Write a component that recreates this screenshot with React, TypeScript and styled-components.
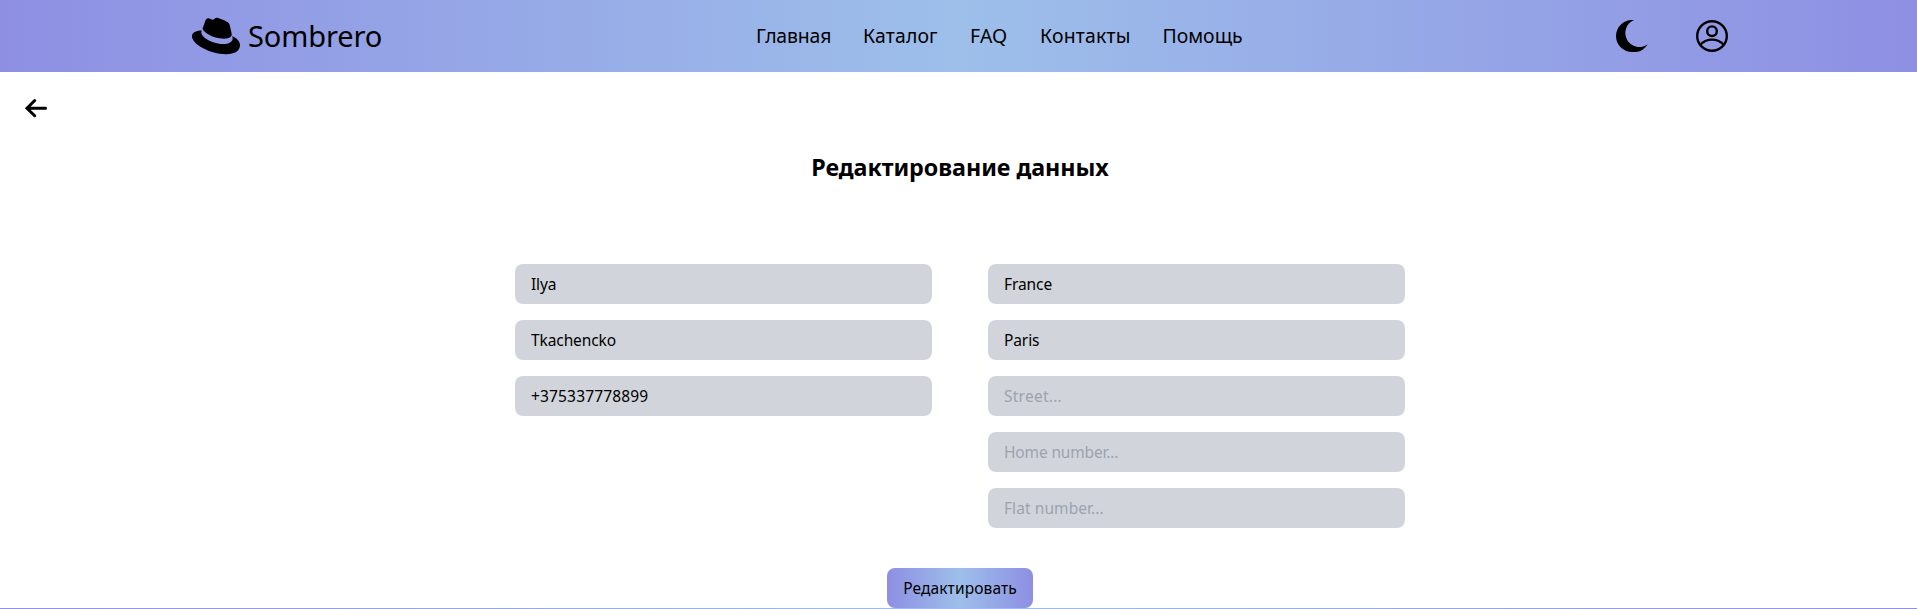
import React from "react";
import styled, { createGlobalStyle } from "styled-components";
import { FaRedhat } from "react-icons/fa";

const brandGradient = "linear-gradient(90deg, #8e8fe3 0%, #9dbfea 50%, #8e8fe3 100%)";

const GlobalStyle = createGlobalStyle`
  *, *::before, *::after { box-sizing: border-box; }
  body {
    margin: 0;
    background: #fff;
    color: #000;
    font-family: "Noto Sans", sans-serif;
    font-size: 15.5px;
    line-height: 24px;
  }
`;

const Page = styled.div`
  display: flex;
  flex-direction: column;
  height: 609px;
  overflow: hidden;
`;

const Header = styled.header`
  display: flex;
  align-items: center;
  flex: 0 0 72px;
  padding: 0 189px 0 192px;
  background: ${brandGradient};
`;

const Logo = styled.a`
  display: flex;
  align-items: center;
  gap: 8px;
  width: 564px;
  font-size: 29px;
  line-height: 36px;
`;

const Fit = styled.span<{ $spacing: number }>`
  letter-spacing: ${(p) => p.$spacing}px;
  white-space: nowrap;
`;

const Nav = styled.nav`
  display: flex;
  flex: 1;
  font-size: 19.4px;
  line-height: 28px;
`;

const NavLink = styled.a<{ $width: number; $spacing: number }>`
  width: ${(p) => p.$width}px;
  letter-spacing: ${(p) => p.$spacing}px;
  white-space: nowrap;
`;

const Actions = styled.div`
  display: flex;
  align-items: center;
  gap: 48px;
`;

const BackButton = styled.button`
  display: flex;
  align-self: flex-start;
  margin: 24px 0 0 24px;
  padding: 0;
  border: 0;
  background: none;
`;

const Main = styled.main`
  display: flex;
  flex-direction: column;
  align-items: center;
  padding-left: 3px;
`;

const Title = styled.h1`
  margin: 31px 0 81px;
  font-size: 23.3px;
  font-weight: 700;
  line-height: 32px;
`;

const Form = styled.form`
  display: flex;
  flex-direction: column;
  align-items: center;
  gap: 40px;
`;

const Columns = styled.div`
  display: flex;
  gap: 56px;
`;

const Column = styled.div`
  display: flex;
  flex-direction: column;
  gap: 16px;
  width: 417px;
`;

const Field = styled.input<{ $spacing: number }>`
  height: 40px;
  padding: 0 16px;
  border: 0;
  border-radius: 8px;
  background: #d1d5db;
  color: #000;
  font: inherit;
  letter-spacing: ${(p) => p.$spacing}px;
  &::placeholder { color: #9ca3af; opacity: 1; }
`;

const Submit = styled.button`
  width: 146px;
  height: 40px;
  padding: 0;
  border: 0;
  border-radius: 8px;
  background: ${brandGradient};
  color: #000;
  font: inherit;
`;

const Footer = styled.footer`
  flex: 0 0 1px;
  background: ${brandGradient};
`;

const links = [
  { label: "Главная", width: 107, spacing: -0.15 },
  { label: "Каталог", width: 107, spacing: 0.15 },
  { label: "FAQ", width: 70, spacing: 0.2 },
  { label: "Контакты", width: 122.5, spacing: 0.2 },
  { label: "Помощь", width: 90, spacing: 0 },
];

const personal = [
  { name: "name", value: "Ilya", spacing: -0.15 },
  { name: "surname", value: "Tkachencko", spacing: -0.1 },
  { name: "phone", value: "+375337778899", spacing: 0.16 },
];

const address = [
  { name: "country", value: "France", spacing: -0.08 },
  { name: "city", value: "Paris", spacing: -0.1 },
  { name: "street", placeholder: "Street...", spacing: 0.25 },
  { name: "home", placeholder: "Home number...", spacing: -0.15 },
  { name: "flat", placeholder: "Flat number...", spacing: 0.08 },
];

type FieldData = { name: string; value?: string; placeholder?: string; spacing: number };

const Fields = ({ items }: { items: FieldData[] }) => (
  <Column>
    {items.map((f) => (
      <Field key={f.name} name={f.name} defaultValue={f.value} placeholder={f.placeholder} $spacing={f.spacing} />
    ))}
  </Column>
);

const MoonIcon = () => (
  <svg width="32" height="32" viewBox="0 0 32 32">
    <path d="M18 0A14.05 14.05 0 1 0 31.7 24.3A16.4 16.4 0 0 1 16 32A16 16 0 0 1 0 16A16.2 16.2 0 0 1 18 0Z" />
  </svg>
);

const ProfileIcon = () => (
  <svg width="32" height="32" viewBox="0 0 32 32" fill="none" stroke="#000" strokeWidth="2.4">
    <circle cx="16" cy="16" r="14.8" />
    <circle cx="16" cy="11.2" r="4.8" />
    <path d="M4.2 24.8C10.2 17.9 21.8 17.9 27.8 24.8" />
  </svg>
);

export default function App() {
  return (
    <Page>
      <GlobalStyle />
      <Header>
        <Logo>
          <FaRedhat size={48} />
          <Fit $spacing={-0.1}>Sombrero</Fit>
        </Logo>
        <Nav>
          {links.map((l) => (
            <NavLink key={l.label} $width={l.width} $spacing={l.spacing}>{l.label}</NavLink>
          ))}
        </Nav>
        <Actions>
          <MoonIcon />
          <ProfileIcon />
        </Actions>
      </Header>
      <BackButton type="button" aria-label="Назад">
        <svg width="24" height="24" viewBox="0 0 24 24" fill="none" stroke="#000" strokeWidth="3" strokeLinecap="round">
          <path d="M3.5 12.2H21.5M10.7 4.5L3 12.2L10.7 19.7" />
        </svg>
      </BackButton>
      <Main>
        <Title><Fit $spacing={-0.05}>Редактирование данных</Fit></Title>
        <Form>
          <Columns>
            <Fields items={personal} />
            <Fields items={address} />
          </Columns>
          <Submit type="button"><Fit $spacing={0.12}>Редактировать</Fit></Submit>
        </Form>
      </Main>
      <Footer />
    </Page>
  );
}
